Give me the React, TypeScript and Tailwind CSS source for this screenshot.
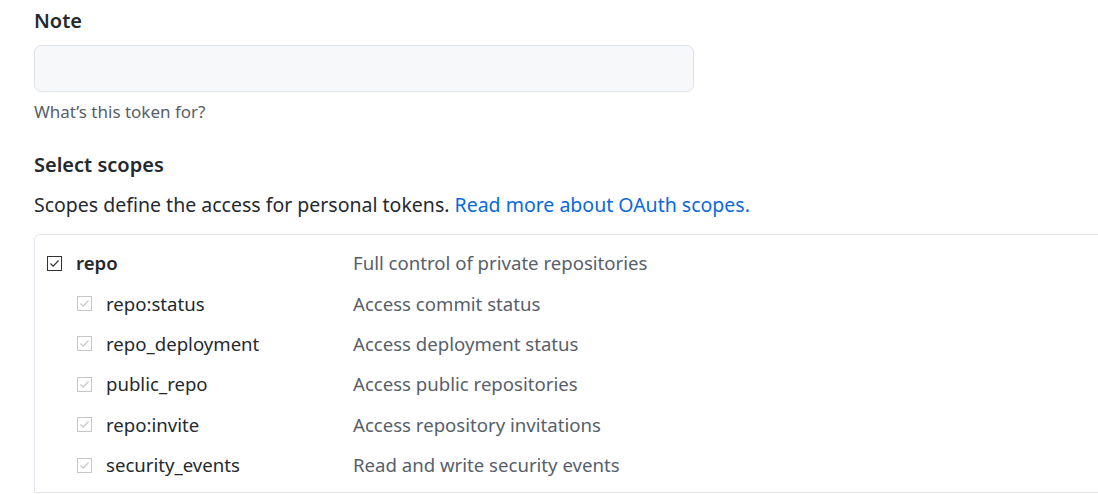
import React from 'react';

type Scope = {
  name: string;
  description: string;
  child?: boolean;
};

const scopes: Scope[] = [
  { name: 'repo', description: 'Full control of private repositories' },
  { name: 'repo:status', description: 'Access commit status', child: true },
  { name: 'repo_deployment', description: 'Access deployment status', child: true },
  { name: 'public_repo', description: 'Access public repositories', child: true },
  { name: 'repo:invite', description: 'Access repository invitations', child: true },
  { name: 'security_events', description: 'Read and write security events', child: true },
];

function CheckBox({ disabled }: { disabled?: boolean }) {
  const stroke = disabled ? '#c6c6c6' : '#333333';
  return (
    <svg width="15" height="15" viewBox="0 0 15 15" className="shrink-0">
      <rect x="0.5" y="0.5" width="14" height="14" fill="white" stroke={stroke} />
      <path d="M3.5 7.5 L6.2 10.2 L11.5 4.5" fill="none" stroke={stroke} strokeWidth="1.2" />
    </svg>
  );
}

export default function App() {
  return (
    <div className="min-h-[494px] bg-white pl-[34px] pt-[8px] text-[#24292f] overflow-hidden" style={{ fontFamily: '"Noto Sans", "Open Sans", sans-serif' }}>
      <label className="block text-[20px] font-semibold leading-[26px]">Note</label>
      <div className="mt-[11px] h-[47px] w-[660px] rounded-[7px] border border-[#dfe2e6] bg-[#f6f8fa]" />
      <p className="mt-[8px] text-[17px] leading-[24px] text-[#57606a]">What’s this token for?</p>

      <h3 className="mt-[28px] text-[20px] font-semibold leading-[26px]">Select scopes</h3>
      <p className="mt-[13px] text-[19.5px] leading-[28px]">
        Scopes define the access for personal tokens.{' '}
        <a className="text-[#0969da]">Read more about OAuth scopes.</a>
      </p>

      <div className="mt-[15px] w-[1100px] rounded-tl-[6px] border border-[#e1e4e8] pt-[8px] pb-[7px] pl-[12px]">
        {scopes.map((s) => (
          <div key={s.name} className="flex h-[40.4px] items-center">
            <div className={`flex w-[306px] items-center gap-[14px] ${s.child ? 'pl-[30px]' : ''}`}>
              <CheckBox disabled={s.child} />
              <span className={`text-[18.6px] ${s.child ? '' : 'font-semibold'}`}>{s.name}</span>
            </div>
            <span className="text-[18.6px] text-[#57606a]">{s.description}</span>
          </div>
        ))}
      </div>
    </div>
  );
}
